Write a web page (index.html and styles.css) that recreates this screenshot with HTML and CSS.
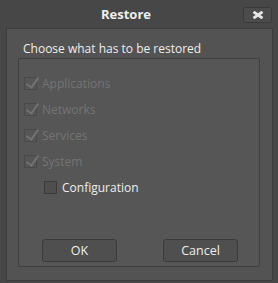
FILE: index.html
```html
<!DOCTYPE html>
<html lang="en">
<head>
    <meta charset="UTF-8">
    <title>Restore</title>
    <link rel="stylesheet" href="styles.css">
</head>
<body>
    <div class="window">
        <div class="titlebar">
            <span class="title">Restore</span>
            <button class="but_close" type="button">
                <svg width="12" height="8" viewBox="0 0 12 8"><path d="M1.5 0.8 L10.5 7.2 M10.5 0.8 L1.5 7.2" stroke="#e6e6e6" stroke-width="2.8"/></svg>
            </button>
        </div>
        <div class="panel">
            <div class="heading">Choose what has to be restored</div>
            <div class="group">
                <div class="opts">
                    <label class="opt disabled"><span class="box checked"></span>Applications</label>
                    <label class="opt disabled"><span class="box checked"></span>Networks</label>
                    <label class="opt disabled"><span class="box checked"></span>Services</label>
                    <label class="opt disabled"><span class="box checked"></span>System</label>
                    <label class="opt sub"><span class="box"></span>Configuration</label>
                </div>
                <div class="sec_buttons">
                    <button class="but_dlg" type="button">OK</button>
                    <button class="but_dlg" type="button">Cancel</button>
                </div>
            </div>
        </div>
    </div>
</body>
</html>
```
FILE: styles.css
```css
*{
    font-family: "Open Sans", "Noto Sans", sans-serif;
    box-sizing: border-box;
}
body{
    margin: 0;
    background-color: #474747;
}
.window{
    width: 278px;
    height: 283px;
    display: flex;
    flex-direction: column;
}
.titlebar{
    height: 28px;
    display: flex;
    align-items: center;
    position: relative;
}
.title{
    flex: 1;
    text-align: center;
    padding-right: 26px;
    color: #eeeeee;
    font-weight: bold;
    font-size: 13px;
}
.but_close{
    position: absolute;
    left: 243px;
    top: 7px;
    width: 29px;
    height: 16px;
    padding: 0;
    border: 1px solid #3a3a3a;
    border-radius: 3px;
    background: #4c4c4c;
    display: flex;
    align-items: center;
    justify-content: center;
}
.panel{
    margin: 0 5px 2px 6px;
    flex: 1;
    background-color: #535353;
    border: 1px solid #3d3d3d;
    display: flex;
    flex-direction: column;
    padding: 0 12px 13px 11px;
}
.heading{
    color: #eeeeee;
    font-size: 12px;
    padding: 11px 0 0 5px;
    height: 29px;
}
.group{
    flex: 1;
    border: 1px solid #3f3f3f;
    border-radius: 2px;
    background-color: #565656;
    display: flex;
    flex-direction: column;
    padding: 11px 0 0 5px;
}
.opts{
    display: flex;
    flex-direction: column;
}
.opt{
    height: 26px;
    display: flex;
    align-items: center;
    color: #eeeeee;
    font-size: 12px;
}
.opt.disabled{
    color: #747474;
}
.opt.sub{
    padding-left: 20px;
}
.box{
    width: 13px;
    height: 13px;
    margin-right: 5px;
    border: 1px solid #3b3b3b;
    background: #4e4e4e;
    position: relative;
}
.opt.disabled .box{
    border-color: #4a4a4a;
    background: #565656;
}
.box.checked::after{
    content: "";
    position: absolute;
    left: 4px;
    top: -3px;
    width: 5px;
    height: 11px;
    border-right: 2px solid #727272;
    border-bottom: 2px solid #727272;
    transform: rotate(35deg);
}
.sec_buttons{
    margin-top: auto;
    margin-bottom: 4px;
    padding-right: 3px;
    display: flex;
    justify-content: center;
    gap: 46px;
}
.but_dlg{
    width: 75px;
    height: 23px;
    border: 1px solid #3a3a3a;
    border-radius: 3px;
    background: #4f4f4f;
    color: #eeeeee;
    font-size: 12.5px;
    padding: 0;
}
```
